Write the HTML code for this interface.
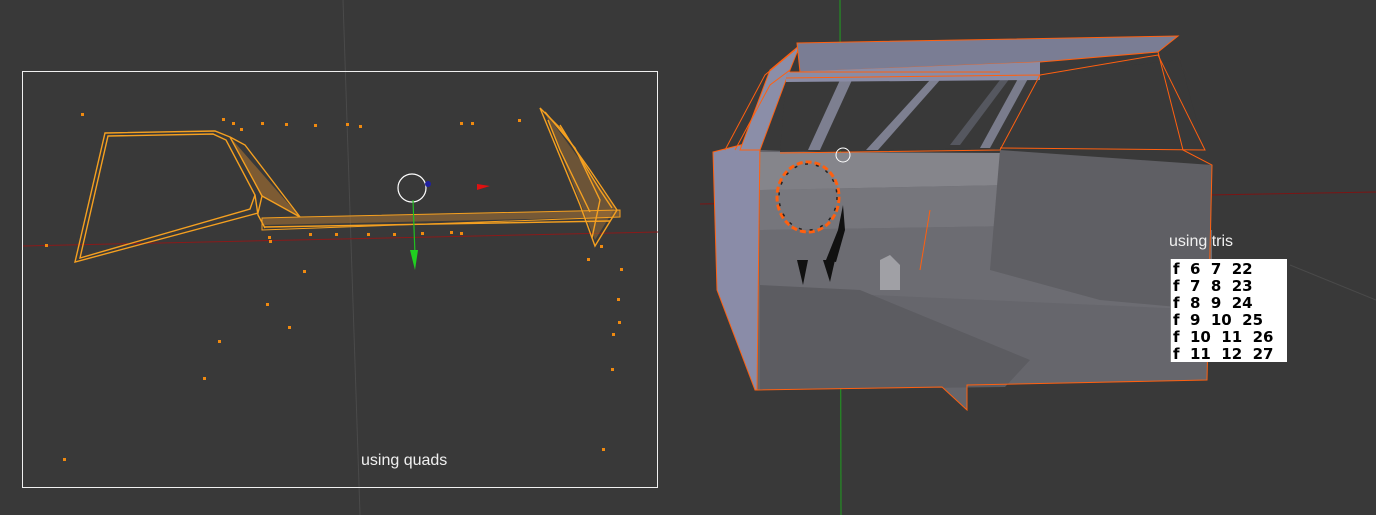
<!DOCTYPE html>
<html><head><meta charset="utf-8"><style>
html,body{margin:0;padding:0;background:#393939;width:1376px;height:515px;overflow:hidden}
svg{display:block}
</style></head><body>
<svg width="1376" height="515" viewBox="0 0 1376 515" xmlns="http://www.w3.org/2000/svg">
<rect width="1376" height="515" fill="#393939"/>
<line x1="343" y1="0" x2="360" y2="515" stroke="#4a4a4a" stroke-width="1"/>
<line x1="1290" y1="265" x2="1376" y2="300" stroke="#4a4a4a" stroke-width="1"/>
<!-- left panel -->
<rect x="22.5" y="71.5" width="635" height="416" fill="none" stroke="#f0f0f0" stroke-width="1"/>
<line x1="23" y1="246" x2="658" y2="232" stroke="#8a1a1a" stroke-width="1"/>
<polygon points="230,137 300,217 262,196" fill="#9a6a30" opacity="0.7"/>
<polygon points="262,218 620,210 620,217 262,225" fill="#a07035" opacity="0.6"/>
<polygon points="545,112 615,208 595,240" fill="#a07035" opacity="0.5"/>
<g fill="none" stroke="#f5a020" stroke-width="1.4">
<polygon points="105,133 215,131 230,137 262,196 258,213 75,262"/>
<polygon points="108,136 213,134 226,140 255,195 250,209 80,258"/>
<polyline points="230,137 245,145 300,217 262,196"/>
<polyline points="255,195 258,215 265,228"/>
<polygon points="262,218 300,217 620,210 620,217 262,230" stroke-width="1"/>
<line x1="265" y1="227" x2="610" y2="221"/>
<polygon points="540,108 560,128 590,170 617,210 595,246 580,205"/>
<polyline points="545,112 575,148 600,200 592,238"/>
<polyline points="548,120 560,150 590,212"/>
<polyline points="560,125 600,190 612,208"/>
</g>
<g fill="#f08a10">
<rect x="81" y="113" width="3" height="3"/><rect x="222" y="118" width="3" height="3"/><rect x="232" y="122" width="3" height="3"/><rect x="240" y="128" width="3" height="3"/><rect x="261" y="122" width="3" height="3"/><rect x="285" y="123" width="3" height="3"/><rect x="314" y="124" width="3" height="3"/><rect x="346" y="123" width="3" height="3"/><rect x="359" y="125" width="3" height="3"/><rect x="460" y="122" width="3" height="3"/><rect x="471" y="122" width="3" height="3"/><rect x="518" y="119" width="3" height="3"/>
<rect x="268" y="236" width="3" height="3"/><rect x="269" y="240" width="3" height="3"/><rect x="309" y="233" width="3" height="3"/><rect x="335" y="233" width="3" height="3"/><rect x="367" y="233" width="3" height="3"/><rect x="393" y="233" width="3" height="3"/><rect x="421" y="232" width="3" height="3"/><rect x="450" y="231" width="3" height="3"/><rect x="460" y="232" width="3" height="3"/><rect x="45" y="244" width="3" height="3"/><rect x="587" y="258" width="3" height="3"/><rect x="620" y="268" width="3" height="3"/><rect x="600" y="245" width="3" height="3"/>
<rect x="303" y="270" width="3" height="3"/><rect x="266" y="303" width="3" height="3"/><rect x="617" y="298" width="3" height="3"/><rect x="288" y="326" width="3" height="3"/><rect x="618" y="321" width="3" height="3"/><rect x="612" y="333" width="3" height="3"/><rect x="218" y="340" width="3" height="3"/><rect x="611" y="368" width="3" height="3"/><rect x="203" y="377" width="3" height="3"/><rect x="63" y="458" width="3" height="3"/><rect x="602" y="448" width="3" height="3"/>
</g>
<circle cx="412" cy="188" r="14" fill="none" stroke="#fff" stroke-width="1.2"/>
<line x1="413" y1="200" x2="415" y2="255" stroke="#20c020" stroke-width="1.2"/>
<polygon points="410,250 418,250 415,270" fill="#20d020"/>
<polygon points="477,184 490,186 477,190" fill="#e01010"/>
<circle cx="428" cy="184" r="3" fill="#2020a0"/>
<text x="361" y="465" font-family="Liberation Sans, sans-serif" font-size="16" fill="#f0f0f0">using quads</text>

<!-- right car -->
<line x1="840" y1="0" x2="841" y2="515" stroke="#1fa01f" stroke-width="1"/>
<line x1="700" y1="204" x2="1376" y2="192" stroke="#7a1515" stroke-width="1"/>
<polygon points="757,150 1212,165 1207,380 967,385 967,410 942,387 757,390" fill="#66666c"/>
<polygon points="757,152 1010,153 1010,185 760,190" fill="#85858b"/>
<polygon points="760,190 1010,185 1080,205 1080,225 760,230" fill="#76767c"/>
<polygon points="760,230 1080,225 1212,230 1212,310 760,290" fill="#6c6c72"/>
<polygon points="1000,150 1212,165 1210,310 1100,300 990,270" fill="#5f5f64"/>
<polygon points="760,285 860,290 1030,360 1005,387 760,390" fill="#5c5c61"/>
<polygon points="880,260 890,255 900,265 900,290 880,290" fill="#a0a0a5"/>
<!-- windows -->
<polygon points="786,78 1040,75 1000,148 780,152" fill="#393939"/>
<polygon points="1040,75 1180,60 1205,150 1000,148" fill="#393939"/>
<polygon points="840,80 852,80 820,150 808,150" fill="#7d7f90"/>
<polygon points="930,80 940,80 878,150 866,150" fill="#7d7f90"/>
<polygon points="1020,75 1030,75 990,148 980,148" fill="#7a7c8c"/>
<polygon points="1000,80 1010,78 960,145 950,145" fill="#55575f"/>
<polygon points="713,152 760,140 757,390 755,390 717,290" fill="#8a8ca8" stroke="#ff6010" stroke-width="1"/>
<polygon points="740,150 770,70 800,45 786,80 760,150" fill="#8b8ea8" stroke="#ff6010" stroke-width="1"/>
<polygon points="797,43 1178,36 1158,52 1040,62 800,72" fill="#7a7d94" stroke="#ff6010" stroke-width="1"/>
<polygon points="786,72 1040,62 1040,80 786,82" fill="#8a8ca6"/>
<g fill="none" stroke="#ff6010" stroke-width="1">
<polyline points="757,390 942,387 967,410 967,385 1207,380 1212,165 1183,150 1158,52"/>
<polyline points="786,78 1040,75 1000,150 780,153"/>
<polyline points="1040,75 1158,55 1205,150 1000,148"/>
<polyline points="725,150 765,75 795,50"/>
<polyline points="735,150 770,85 790,70"/>
<polyline points="790,72 1000,72"/>
<line x1="930" y1="210" x2="920" y2="270"/>
</g>
<ellipse cx="808" cy="197" rx="31" ry="35" fill="#7a7a80" opacity="0.5"/>
<ellipse cx="808" cy="197" rx="31" ry="35" fill="none" stroke="#ff6010" stroke-width="3" stroke-dasharray="6 3"/>
<ellipse cx="808" cy="197" rx="29" ry="33" fill="none" stroke="#222" stroke-width="1.5" stroke-dasharray="3 8"/>
<polygon points="843,205 838,230 826,260 836,262 845,230" fill="#111"/>
<polygon points="797,260 808,260 803,285" fill="#111"/>
<polygon points="823,260 835,260 830,282" fill="#111"/>
<circle cx="843" cy="155" r="7" fill="none" stroke="#fff" stroke-width="1"/>
<text x="1169" y="246" font-family="Liberation Sans, sans-serif" font-size="16" fill="#f0f0f0">using tris</text>
<rect x="1170" y="259" width="117" height="103" fill="#fff"/>
<line x1="1170.5" y1="259" x2="1170.5" y2="362" stroke="#888"/>
<g font-family="DejaVu Sans, sans-serif" font-size="15" font-weight="bold" fill="#000">
<text x="1173" y="274" xml:space="preserve">f  6  7  22</text>
<text x="1173" y="291" xml:space="preserve">f  7  8  23</text>
<text x="1173" y="308" xml:space="preserve">f  8  9  24</text>
<text x="1173" y="325" xml:space="preserve">f  9  10  25</text>
<text x="1173" y="342" xml:space="preserve">f  10  11  26</text>
<text x="1173" y="359" xml:space="preserve">f  11  12  27</text>
</g>
</svg>
</body></html>
